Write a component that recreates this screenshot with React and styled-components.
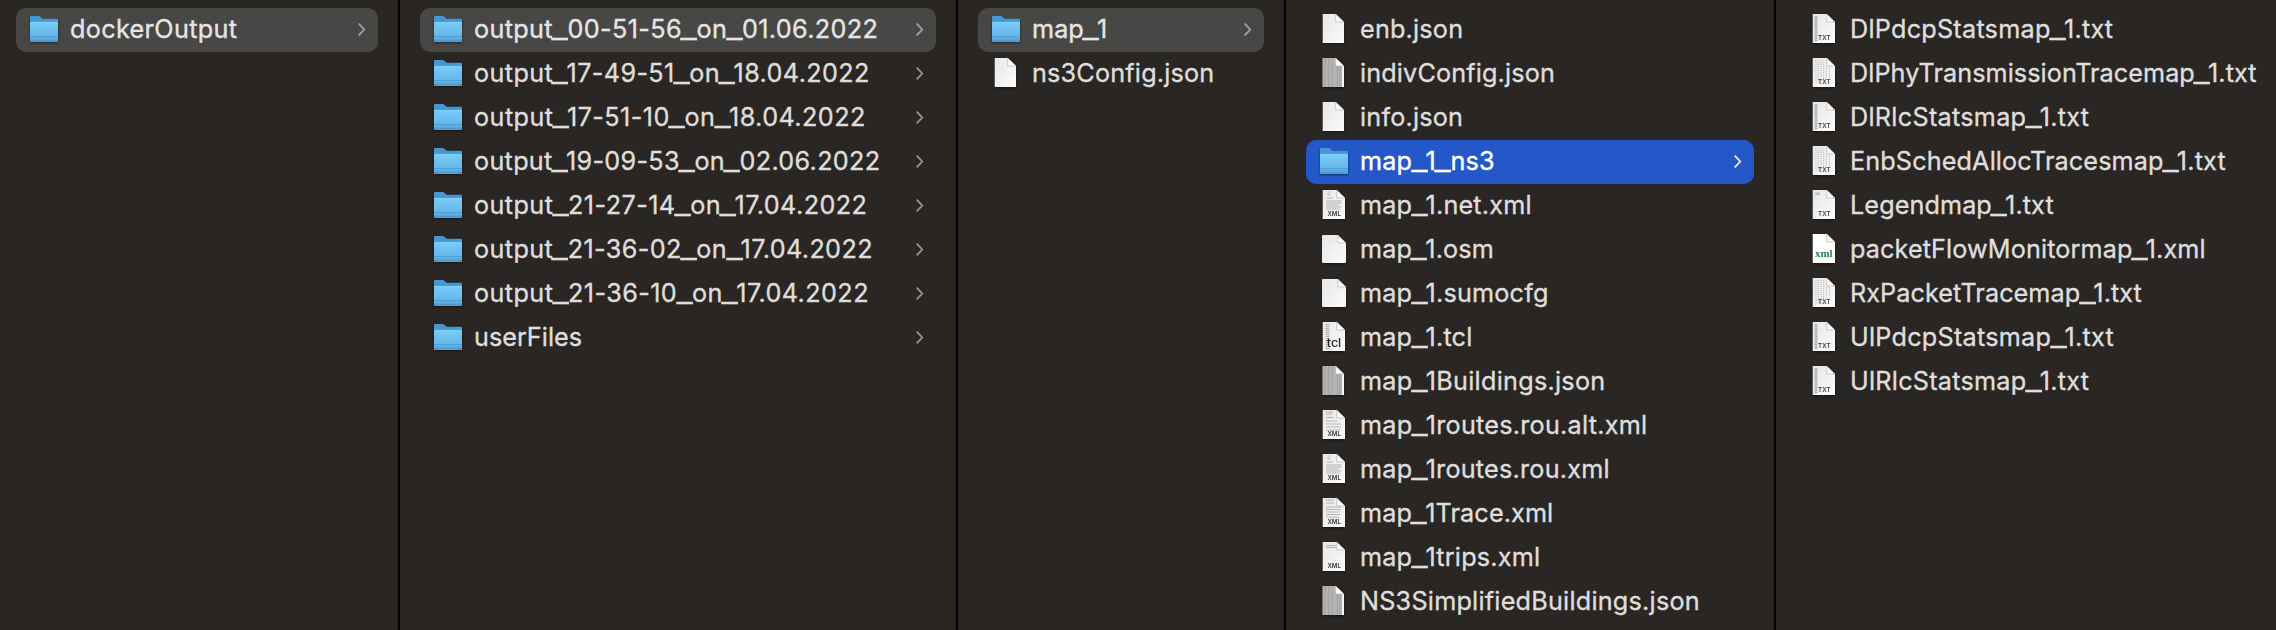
import React from 'react';
import styled, { createGlobalStyle } from 'styled-components';

const GlobalStyle = createGlobalStyle`
  body {
    margin: 0;
    background: #2a2624;
  }
`;

const Browser = styled.main`
  display: flex;
  width: 2276px;
  height: 630px;
  overflow: hidden;
  background: #2a2624;
  color: #dfdedd;
  font-family: Inter, 'Liberation Sans', sans-serif;
  font-size: 25.2px;
`;

const Column = styled.ul`
  box-sizing: border-box;
  flex: none;
  width: ${(p) => p.$width}px;
  margin: 0;
  padding: 8px 20px 0 ${(p) => p.$inset}px;
  list-style: none;
  border-right: ${(p) => (p.$last ? 0 : 2)}px solid #000;
`;

const rowColors = {
  open: ['#474746', '#e6e5e5', '#a3a3a2'],
  active: ['#2458c9', '#ffffff', '#e8eefb'],
  plain: ['transparent', '#dfdedd', '#989694'],
};

const Row = styled.li`
  box-sizing: border-box;
  display: flex;
  align-items: center;
  gap: 12px;
  height: 44px;
  padding: 0 13px 0 14px;
  border-radius: 10px;
  background: ${(p) => rowColors[p.$state][0]};
  color: ${(p) => rowColors[p.$state][1]};
`;

const IconBox = styled.svg`
  flex: none;
  width: 28px;
  height: 32px;
  overflow: visible;
  filter: drop-shadow(0 1px 1px rgba(0, 0, 0, 0.5));
`;

const Name = styled.span`
  flex: 1;
  padding-bottom: 2px;
  line-height: 42px;
  white-space: nowrap;
  letter-spacing: ${(p) => p.$tracking}px;
  -webkit-text-stroke: 0.35px currentColor;
`;

const Underscore = styled.span`
  display: inline-block;
  margin: 0 ${(p) => (p.$tight ? 0.2 : 1.4)}px 0 1.4px;
  transform: scaleX(1.42);
`;

const Arrow = styled.svg`
  flex: none;
  width: 7px;
  height: 13px;
  margin-bottom: 1px;
  overflow: visible;
  fill: none;
  stroke: ${(p) => rowColors[p.$state][2]};
  stroke-width: 1.8;
`;

function FolderIcon() {
  return (
    <IconBox viewBox="0 0 28 32">
      <path d="M0 3.2Q0 2 1.2 2H8.6Q9.6 2 10.4 2.8L12 4.2Q12.6 4.8 13.6 4.8H27Q28 4.8 28 5.8V12H0Z" fill="#4597d3" />
      <path d="M0 9Q0 8 1 8H27Q28 8 28 9V27Q28 28 27 28H1Q0 28 0 27Z" fill="url(#folderFront)" />
      <path d="M.6 8.4H27.4" stroke="#82d3fa" strokeWidth=".9" />
      <path d="M0 22.6H28M0 26.4H28" stroke="#4590c4" strokeWidth=".8" opacity=".75" />
    </IconBox>
  );
}

const stripes = {
  code: [
    [2, 7.5, 3], [4.5, 7, 3.6], [8, 7, 6], [11, 6.2, 15.5], [13, 6.2, 15.5],
    [15, 6.2, 13], [17, 6.2, 15.5], [19, 6.2, 14],
  ],
  sparse: [[2, 6, 7], [4, 6, 6], [7.5, 6, 8], [11, 6, 11], [14, 6, 15], [17, 6, 15], [20, 6, 14]],
  trace: [[2, 6, 8], [5, 6, 8], [9, 6, 15], [11.5, 6, 15], [14, 6, 14], [16.5, 6, 15], [19, 6, 13]],
  header: [[3.5, 6, 10], [5.5, 6, 10]],
  legend: [[3, 5, 5], [4.5, 5, 5]],
};

function Content({ body }) {
  if (body === 'dense') {
    return (
      <g>
        <path d="M2.7 0H15.8V8H22V29H2.7Z" fill="#b4b4b4" />
        <path d="M5 0V29M8.7 0V29M12.2 0V29M17.4 9V29M20 9V29" stroke="#999" strokeWidth=".7" />
      </g>
    );
  }
  if (body === 'left') {
    return <path d="M6 2V27" stroke="#aaa" strokeWidth="2.8" strokeDasharray="1.4 .6" />;
  }
  if (body === 'table') {
    return <path d="M6 2V26M8.4 2V26M11 2V26M13.6 2V21M16.4 9V21M19.4 9V21" stroke="#c6c6c6" strokeWidth="1.1" strokeDasharray="1.3 .7" />;
  }
  if (body === 'script') {
    return <path d="M7.5 2V28" stroke="#b5b5b5" strokeWidth="4" strokeDasharray="1.2 .8" />;
  }
  return (stripes[body] || []).map(([y, x, w]) => (
    <path key={y} d={`M${x} ${y}h${w}`} stroke="#adadad" strokeWidth=".9" />
  ));
}

const labels = {
  XML: { x: 7.5, y: 25.9, size: 6, width: 13.4, fill: '#333', weight: 600 },
  TXT: { x: 8.1, y: 26.1, size: 6, width: 12.4, fill: '#3c3c3c', weight: 600 },
  tcl: { x: 6.8, y: 24.6, size: 11.4, width: 14.4, fill: '#222', weight: 500 },
  xml: { x: 5, y: 23.3, size: 11.4, width: 17.6, fill: '#298354', weight: 700, serif: true },
};

function FileIcon({ label, body, rounded }) {
  const mark = labels[label];
  const right = mark ? 25 : 24;
  const fold = right - 8.3;
  return (
    <IconBox viewBox="0 0 28 32">
      {rounded ? (
        <>
          <path d="M3 1H17.7L26 9V28Q26 29 25 29H3Q2 29 2 28V2Q2 1 3 1Z" fill="url(#paper)" />
          <path d="M17.7 1V9H26Z" fill="#fafafa" stroke="#aaa" strokeWidth=".6" />
        </>
      ) : (
        <>
          <path d={`M2.7 0H${fold}L${right} 8V29H2.7Z`} fill={label === 'xml' ? '#fff' : 'url(#paper)'} />
          <Content body={body} />
          <path d={`M${fold} 0V8H${right}Z`} fill="#fdfdfd" stroke="#a9a9a9" strokeWidth=".6" />
        </>
      )}
      {mark && (
        <text
          x={mark.x}
          y={mark.y}
          fontSize={mark.size}
          fontWeight={mark.weight}
          fontFamily={mark.serif ? '"Liberation Serif", serif' : 'Inter, sans-serif'}
          fill={mark.fill}
          textLength={mark.width}
          lengthAdjust="spacingAndGlyphs"
        >
          {label}
        </text>
      )}
    </IconBox>
  );
}

function Entry({ name, tracking, folder, state = 'plain', ...icon }) {
  const parts = name.split(/(_)/);
  return (
    <Row $state={state}>
      {folder ? <FolderIcon /> : <FileIcon {...icon} />}
      <Name $tracking={tracking}>
        {parts.map((part, i) =>
          part === '_' ? (
            <Underscore key={i} $tight={parts[i + 1].startsWith('1')}>
              _
            </Underscore>
          ) : (
            part
          )
        )}
      </Name>
      {folder && (
        <Arrow $state={state} viewBox="0 0 7 13">
          <path d="M.7 .7L6.2 6.5L.7 12.3" />
        </Arrow>
      )}
    </Row>
  );
}

const columns = [
  {
    width: 400,
    inset: 16,
    entries: [{ name: 'dockerOutput', tracking: 0.332, folder: true, state: 'open' }],
  },
  {
    width: 558,
    inset: 20,
    entries: [
      { name: 'output_00-51-56_on_01.06.2022', tracking: 0.36, folder: true, state: 'open' },
      { name: 'output_17-49-51_on_18.04.2022', tracking: 0.38, folder: true },
      { name: 'output_17-51-10_on_18.04.2022', tracking: 0.44, folder: true },
      { name: 'output_19-09-53_on_02.06.2022', tracking: 0.3, folder: true },
      { name: 'output_21-27-14_on_17.04.2022', tracking: 0.425, folder: true },
      { name: 'output_21-36-02_on_17.04.2022', tracking: 0.38, folder: true },
      { name: 'output_21-36-10_on_17.04.2022', tracking: 0.42, folder: true },
      { name: 'userFiles', tracking: 0.03, folder: true },
    ],
  },
  {
    width: 328,
    inset: 20,
    entries: [
      { name: 'map_1', tracking: 0.076, folder: true, state: 'open' },
      { name: 'ns3Config.json', tracking: 0.2 },
    ],
  },
  {
    width: 490,
    inset: 20,
    entries: [
      { name: 'enb.json', tracking: 0.2 },
      { name: 'indivConfig.json', tracking: 0.15, body: 'dense' },
      { name: 'info.json', tracking: 0.2 },
      { name: 'map_1_ns3', tracking: 0.2, folder: true, state: 'active' },
      { name: 'map_1.net.xml', tracking: 0.2, label: 'XML', body: 'code' },
      { name: 'map_1.osm', tracking: 0.138, rounded: true },
      { name: 'map_1.sumocfg', tracking: 0.2, rounded: true },
      { name: 'map_1.tcl', tracking: 0.2, label: 'tcl', body: 'script' },
      { name: 'map_1Buildings.json', tracking: 0.27, body: 'dense' },
      { name: 'map_1routes.rou.alt.xml', tracking: 0.25, label: 'XML', body: 'sparse' },
      { name: 'map_1routes.rou.xml', tracking: 0.23, label: 'XML', body: 'code' },
      { name: 'map_1Trace.xml', tracking: 0.12, label: 'XML', body: 'trace' },
      { name: 'map_1trips.xml', tracking: 0.2, label: 'XML', body: 'header' },
      { name: 'NS3SimplifiedBuildings.json', tracking: 0.235, body: 'dense' },
    ],
  },
  {
    width: 500,
    inset: 20,
    entries: [
      { name: 'DlPdcpStatsmap_1.txt', tracking: 0.25, label: 'TXT', body: 'left' },
      { name: 'DlPhyTransmissionTracemap_1.txt', tracking: 0.07, label: 'TXT', body: 'table' },
      { name: 'DlRlcStatsmap_1.txt', tracking: 0.29, label: 'TXT', body: 'left' },
      { name: 'EnbSchedAllocTracesmap_1.txt', tracking: 0.14, label: 'TXT', body: 'table' },
      { name: 'Legendmap_1.txt', tracking: 0.1, label: 'TXT', body: 'legend' },
      { name: 'packetFlowMonitormap_1.xml', tracking: 0.12, label: 'xml' },
      { name: 'RxPacketTracemap_1.txt', tracking: 0.07, label: 'TXT', body: 'table' },
      { name: 'UlPdcpStatsmap_1.txt', tracking: 0.25, label: 'TXT', body: 'left' },
      { name: 'UlRlcStatsmap_1.txt', tracking: 0.25, label: 'TXT', body: 'left' },
    ],
  },
];

const Gradients = styled.svg`
  position: absolute;
  width: 0;
  height: 0;
`;

export default function App() {
  return (
    <>
      <GlobalStyle />
      <Gradients aria-hidden="true">
        <defs>
          <linearGradient id="folderFront" x1="0" y1="0" x2="0" y2="1">
            <stop offset="0" stopColor="#7accf8" />
            <stop offset=".7" stopColor="#66b7e9" />
            <stop offset="1" stopColor="#509fd4" />
          </linearGradient>
          <linearGradient id="paper" x1="0" y1="0" x2="1" y2="1">
            <stop offset="0" stopColor="#e6e6e6" />
            <stop offset="1" stopColor="#fcfcfc" />
          </linearGradient>
        </defs>
      </Gradients>
      <Browser>
        {columns.map((column, i) => (
          <Column key={i} $width={column.width} $inset={column.inset} $last={i === columns.length - 1}>
            {column.entries.map((entry) => (
              <Entry key={entry.name} {...entry} />
            ))}
          </Column>
        ))}
      </Browser>
    </>
  );
}
